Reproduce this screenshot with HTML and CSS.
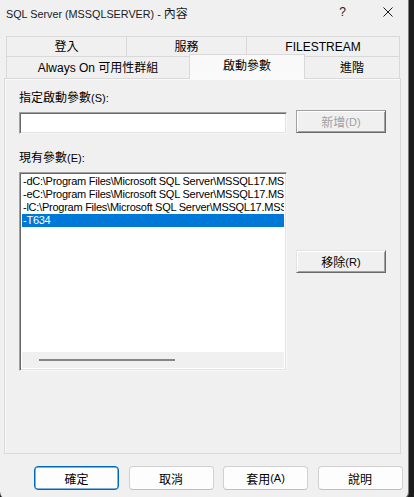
FILE: index.html
```html
<!DOCTYPE html>
<html lang="zh-Hant">
<head>
<meta charset="utf-8">
<title>SQL Server (MSSQLSERVER) - 內容</title>
<link rel="stylesheet" href="styles.css">
</head>
<body>
<div class="win">
  <div class="titlebar">
    <span class="title">SQL Server (MSSQLSERVER) - <span class="cjk">內容</span></span>
    <span class="help">?</span>
    <svg class="close" width="10" height="10" viewBox="0 0 10 10"><path d="M0.5 0.5 L9.5 9.5 M9.5 0.5 L0.5 9.5" stroke="#1a1a1a" stroke-width="1" fill="none"/></svg>
  </div>

  <div class="tabs">
    <div class="tabrow r1">
      <div class="tab t-login">登入</div>
      <div class="tab t-svc">服務</div>
      <div class="tab t-fs"><span class="lat">FILESTREAM</span></div>
    </div>
    <div class="tabrow r2">
      <div class="tab t-ao"><span class="lat">Always On</span>&nbsp;可用性群組</div>
      <div class="tab t-start sel">啟動參數</div>
      <div class="tab t-adv">進階</div>
    </div>
  </div>

  <div class="panel">
    <div class="label">指定啟動參數<span class="sm">(S):</span></div>
    <div class="row row-input">
      <div class="sunken field"></div>
      <div class="classic btn dis">新增<span class="sm">(D)</span></div>
    </div>
    <div class="label label2">現有參數<span class="sm">(E):</span></div>
    <div class="row row-list">
      <div class="sunken list">
        <div class="items">
          <div class="item">-dC:\Program Files\Microsoft SQL Server\MSSQL17.MSSQLSERVER\MSSQL\DATA\master.mdf</div>
          <div class="item">-eC:\Program Files\Microsoft SQL Server\MSSQL17.MSSQLSERVER\MSSQL\Log\ERRORLOG</div>
          <div class="item">-lC:\Program Files\Microsoft SQL Server\MSSQL17.MSSQLSERVER\MSSQL\DATA\mastlog.ldf</div>
          <div class="item selected">-T634</div>
        </div>
        <div class="hscroll"><div class="thumb"></div></div>
      </div>
      <div class="side">
        <div class="classic btn">移除<span class="sm">(R)</span></div>
      </div>
    </div>
  </div>

  <div class="footer">
    <div class="fbtn default">確定</div>
    <div class="fbtn">取消</div>
    <div class="fbtn">套用<span class="sm">(A)</span></div>
    <div class="fbtn">說明</div>
  </div>
</div>
</body>
</html>
```

FILE: styles.css
```css
html, body {
  margin: 0;
  padding: 0;
}
body {
  width: 414px;
  height: 497px;
  overflow: hidden;
  background: #1c1c1c;
  font-family: "Liberation Sans", "Noto Sans CJK TC", sans-serif;
  font-size: 12px;
  color: #000;
}
.win {
  width: 408px;
  height: 499px;
  background: #f0f0f0;
  border-right: 1px solid #7d7d7d;
  border-bottom: 1px solid #7d7d7d;
  border-radius: 0 0 8px 8px;
  overflow: hidden;
}

/* title bar */
.titlebar {
  height: 24px;
  display: flex;
  align-items: center;
  padding-left: 6px;
  padding-right: 15px;
}
.title {
  flex: 1;
  font-family: "Liberation Sans", "Noto Sans CJK TC", sans-serif;
  font-size: 10.8px;
  color: #1a1a1a;
  white-space: nowrap;
}
.title .cjk {
  font-family: "Noto Sans CJK TC", sans-serif;
  font-size: 12px;
}
.help {
  font-family: "Liberation Sans", sans-serif;
  font-size: 12px;
  color: #1a1a1a;
  margin-right: 37px;
}
.close {
  display: block;
  margin-top: -1px;
}

/* tabs */
.tabs {
  margin-top: 12px;
  margin-left: 6px;
}
.tabrow {
  display: flex;
}
.tab {
  box-sizing: border-box;
  border: 1px solid #d9d9d9;
  background: #f0f0f0;
  display: flex;
  align-items: center;
  justify-content: center;
  font-size: 12px;
  line-height: 14px;
  white-space: nowrap;
  margin-left: -1px;
}
.tab:first-child {
  margin-left: 0;
}
.r1 .tab {
  height: 21px;
}
.r2 {
  margin-top: -1px;
  align-items: flex-start;
}
.r2 .tab {
  height: 22px;
  border-bottom: none;
}
.t-login { width: 121px; }
.t-svc { width: 121px; }
.t-fs { width: 154px; }
.t-ao { width: 184px; }
.t-start { width: 116px; }
.t-adv { width: 96px; }
.r2 .tab.sel {
  position: relative;
  z-index: 1;
  height: 25px;
  margin-top: -2px;
  margin-bottom: -1px;
  background: #f9f9f9;
  padding-bottom: 3px;
}
.lat {
  font-size: 12px;
}

/* panel */
.panel {
  box-sizing: border-box;
  margin-left: 4px;
  width: 397px;
  height: 376px;
  border: 1px solid #d9d9d9;
  box-shadow: inset 1px 1px 0 #fafafa;
  background: #f0f0f0;
  padding: 12px 0 0 14px;
}
.label {
  height: 15px;
  line-height: 15px;
  font-size: 12px;
}
.sm {
  font-size: 11px;
}
.row {
  display: flex;
  gap: 9px;
}
.row-input {
  margin-top: 4px;
  height: 23px;
}
.sunken {
  box-sizing: border-box;
  width: 268px;
  background: #fff;
  border-style: solid;
  border-width: 1px;
  border-color: #a0a0a0 #f7f7f7 #f7f7f7 #a0a0a0;
  box-shadow: inset 1px 1px 0 #696969, inset -1px -1px 0 #e3e3e3;
}
.field {
  height: 22px;
  margin-top: 2px;
}
.classic {
  box-sizing: border-box;
  width: 90px;
  height: 23px;
  background: #f0f0f0;
  border-style: solid;
  border-width: 1px;
  border-color: #e3e3e3 #696969 #696969 #e3e3e3;
  box-shadow: inset 1px 1px 0 #fff, inset -1px -1px 0 #a0a0a0;
  display: flex;
  align-items: center;
  justify-content: center;
  font-size: 12px;
}
.classic.dis {
  color: #a0a0a0;
  border-color: #a0a0a0 #696969 #696969 #a0a0a0;
}
.label2 {
  margin-top: 18px;
}
.row-list {
  margin-top: 6px;
}
.list {
  height: 199px;
  display: flex;
  flex-direction: column;
  padding: 2px 2px 2px 2px;
  overflow: hidden;
}
.items {
  flex: 1;
  overflow: hidden;
}
.item {
  height: 13px;
  line-height: 13px;
  font-size: 11px;
  letter-spacing: -0.25px;
  padding-left: 1px;
  white-space: nowrap;
  overflow: hidden;
}
.item.selected {
  background: #0078d7;
  color: #fff;
}
.hscroll {
  height: 16px;
  background: #f0f0f0;
  padding-top: 7px;
  box-sizing: border-box;
}
.thumb {
  margin-left: 17px;
  width: 136px;
  height: 2px;
  background: #858585;
}
.side {
  padding-top: 78px;
}

/* footer */
.footer {
  display: flex;
  gap: 9.5px;
  padding-left: 34px;
  margin-top: 12px;
}
.fbtn {
  box-sizing: border-box;
  width: 85px;
  height: 24px;
  background: #fdfdfd;
  border: 1px solid #d0d0d0;
  border-bottom-color: #bfbfbf;
  border-radius: 4px;
  display: flex;
  align-items: center;
  justify-content: center;
  font-size: 12px;
}
.fbtn.default {
  border: 1px solid #0067c0;
  box-shadow: inset 0 0 0 0.5px #0067c0;
}
```
